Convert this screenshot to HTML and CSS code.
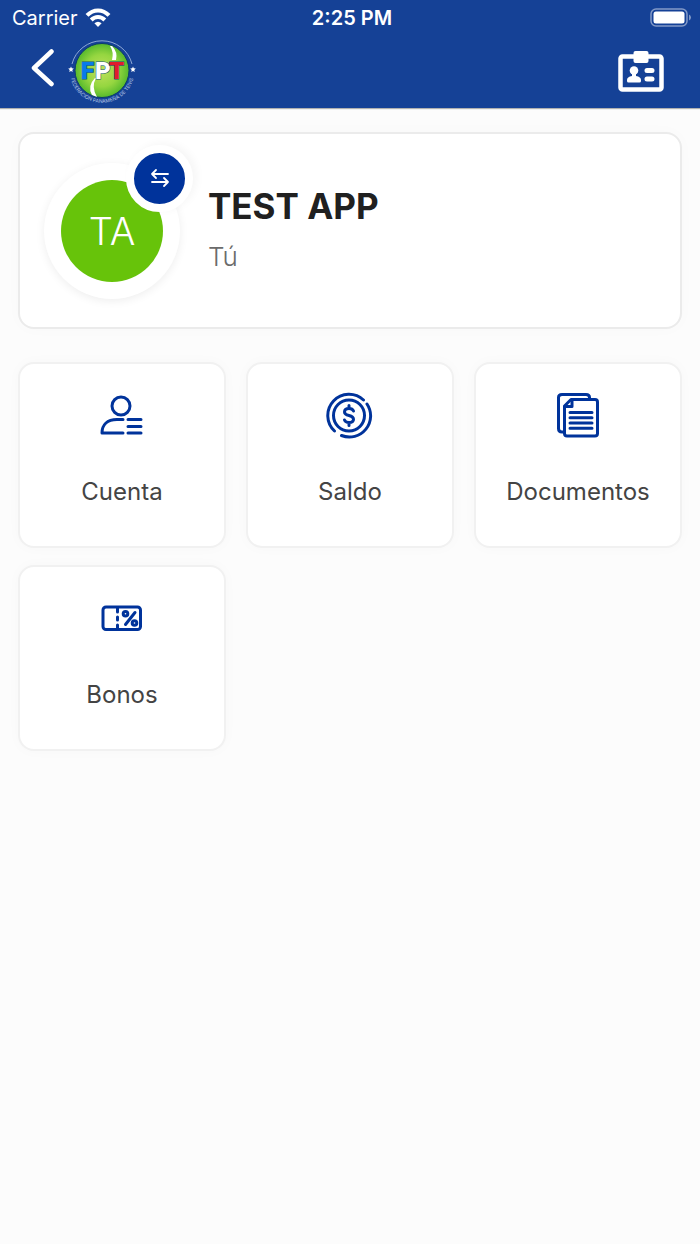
FILE: index.html
```html
<!DOCTYPE html>
<html lang="es">
<head>
<meta charset="UTF-8">
<meta name="viewport" content="width=device-width, initial-scale=1.0">
<title>FPT</title>
<link rel="stylesheet" href="styles.css">
</head>
<body>
<header class="header">
    <div class="status-bar">
        <div class="carrier">
            <span>Carrier</span>
            <svg class="wifi" viewBox="0 0 26 20" fill="none" stroke="#fff" stroke-width="4">
                <path d="M2 7.400C8.300 .8 17.700 .8 24 7.400"></path>
                <path d="M6.200 12C10.200 8 15.800 8 19.800 12"></path>
                <path d="M13 19l-3.600-3.700q3.600-3 7.200 0z" fill="#fff" stroke="none"></path>
            </svg>
        </div>
        <span class="time">2:25 PM</span>
        <svg class="battery" viewBox="0 0 42 20">
            <rect x="1" y="1" width="36" height="17" rx="5" fill="none" stroke="#8299c7" stroke-width="1.500"></rect>
            <rect x="3.500" y="3.500" width="31" height="12" rx="2.500" fill="#fff"></rect>
            <path d="M39 6.500q2 1 2 3t-2 3z" fill="#8299c7"></path>
        </svg>
    </div>
    <nav class="nav-bar">
        <div class="nav-left">
            <button class="icon-button" aria-label="Volver">
                <svg class="back-icon" viewBox="0 0 24 38" fill="none" stroke="#fff" stroke-width="4.500" stroke-linecap="round" stroke-linejoin="round">
                    <path d="M21.500 2.500L4 19l17.500 16"></path>
                </svg>
            </button>
            <svg class="logo" viewBox="0 0 68 68">
                <defs>
                    <radialGradient id="ball">
                        <stop offset="0" stop-color="#c0e05c"></stop>
                        <stop offset="0.600" stop-color="#95d640"></stop>
                        <stop offset="1" stop-color="#56b92c"></stop>
                    </radialGradient>
                    <path id="ring" d="M2 38A32.300 32.300 0 0 0 66 38"></path>
                </defs>
                <path d="M4 27A31 31 0 0 1 64 27" fill="none" stroke="#8ea8d6" stroke-width="1"></path>
                <circle cx="34" cy="33.500" r="27" fill="url(#ball)" stroke="#0c3c6b" stroke-width="1"></circle>
                <path d="M44 9q6 6 4 14h-4q2-8-2-14z" fill="#fff"></path>
                <path d="M27 41q-8 8-3 17l5 2q-6-10-1-19z" fill="#fff"></path>
                <g class="logo-name">
                    <text x="13" y="42" fill="#087bea">F</text>
                    <text x="27" y="42" fill="#fff">P</text>
                    <text x="41" y="42" fill="#e11c2c">T</text>
                </g>
                <text class="logo-ring"><textPath href="#ring" startOffset="50%" text-anchor="middle">FEDERACIÓN PANAMEÑA DE TENIS</textPath></text>
                <path id="star" d="M3 29.500l.8 1.800 2 .2-1.500 1.400.4 2-1.700-1-1.700 1 .4-2-1.500-1.400 2-.2z" fill="#fff"></path>
                <use href="#star" x="62"></use>
            </svg>
        </div>
        <button class="icon-button" aria-label="Carné">
            <svg class="badge-icon" viewBox="0 0 46 42">
                <rect x="2.500" y="6.500" width="41" height="33" rx="2" fill="none" stroke="#fff" stroke-width="4.500"></rect>
                <rect x="15.500" y="1" width="15" height="12" rx="2" fill="#fff"></rect>
                <circle cx="16" cy="20.500" r="4.300" fill="#fff"></circle>
                <path d="M14 23h4v3q5 .8 5 4v1q0 1.500-1.500 1.500h-11Q9 32.500 9 31v-1q0-3.200 5-4z" fill="#fff"></path>
                <path d="M29 20.500h5M29 29h5" stroke="#fff" stroke-width="5" stroke-linecap="round"></path>
            </svg>
        </button>
    </nav>
</header>

<main class="content">
    <section class="profile">
        <div class="avatar">
            <div class="initials">TA</div>
            <button class="switch" aria-label="Cambiar perfil">
                <svg class="switch-icon" viewBox="0 0 20 20" fill="none" stroke="#fff" stroke-width="1.800" stroke-linecap="round" stroke-linejoin="round">
                    <path d="M18 6H2l4-4M2 6l4 4M2 14h16l-4-4M18 14l-4 4"></path>
                </svg>
            </button>
        </div>
        <div class="profile-info">
            <h1 class="name">TEST APP</h1>
            <p class="relation">Tú</p>
        </div>
    </section>

    <section class="menu">
        <a class="menu-item" href="#cuenta">
            <svg class="menu-icon" viewBox="0 0 48 48">
                <circle cx="23" cy="14" r="9"></circle>
                <path d="M25 27.500h-6C9 27.500 4 33 4 41h21M30 27.500h13M30 34.500h13M30 41h13"></path>
            </svg>
            <span>Cuenta</span>
        </a>
        <a class="menu-item" href="#saldo">
            <svg class="menu-icon" viewBox="0 0 48 48">
                <circle cx="23" cy="23.500" r="15.500"></circle>
                <path d="M8.500 39A21.200 21.200 0 0 1 37.500 8M41 12A21.200 21.200 0 0 1 15.500 43.500"></path>
                <path d="M27.500 19Q26.500 16.500 23 16.500q-4.500 0-4.500 3.500 0 2.500 4.500 3.500t4.500 3.700Q27.500 30.500 23 30.500q-3.500 0-4.500-2.500M23 13.500v3M23 30.500v3"></path>
            </svg>
            <span>Saldo</span>
        </a>
        <a class="menu-item" href="#documentos">
            <svg class="menu-icon" viewBox="0 0 48 48">
                <path d="M9 40H8q-3.500 0-3.500-3.500v-31Q4.500 2.500 8 2.500h24q3.500 0 3.500 3v2"></path>
                <path d="M17 7.500h24q2.500 0 2.500 2.500v31.500q0 2.500-2.500 2.500H13q-2.500 0-2.500-2.500V14z"></path>
                <path d="M18 8v6.500h-7M16 20.500h22M16 25.700h22M16 31h22M16 36.200h22"></path>
            </svg>
            <span>Documentos</span>
        </a>
        <a class="menu-item" href="#bonos">
            <svg class="menu-icon" viewBox="0 0 48 48">
                <rect x="5" y="12" width="37.500" height="22.500" rx="3"></rect>
                <path d="M19.500 13v4M19.500 22v3M19.500 30v4M27.500 29.500l9.500-12"></path>
                <circle cx="27.500" cy="18.800" r="2.300"></circle>
                <circle cx="36.500" cy="28" r="2.300"></circle>
            </svg>
            <span>Bonos</span>
        </a>
    </section>
</main>
</body>
</html>
```

FILE: styles.css
```css
:root {
    --header: #154196;
    --accent: #00339b;
    --green: #67c30a;
    --bg: #fcfcfc;
    --border: #ebebeb;
    --text: #202020;
    --text-secondary: #6b6b6b;
}

* {
    box-sizing: border-box;
}

body {
    margin: 0;
    background: var(--bg);
    color: var(--text);
    font-family: Inter, "Liberation Sans", sans-serif;
}

button {
    padding: 0;
    border: none;
    background: none;
    cursor: pointer;
}

svg {
    display: block;
}

.header {
    background: var(--header);
    color: #fff;
    box-shadow: 0 1px 1px rgba(0,0,0,0.3);
}

.status-bar {
    display: grid;
    grid-template-columns: 1fr auto 1fr;
    align-items: center;
    height: 36px;
    padding: 0 8px 0 12px;
    font-size: 20px;
    line-height: 36px;
}

.carrier {
    display: flex;
    align-items: center;
    gap: 7px;
}

.wifi {
    width: 26px;
    height: 20px;
}

.time {
    font-weight: 600;
}

.battery {
    width: 42px;
    height: 20px;
    justify-self: end;
}

.nav-bar {
    display: flex;
    justify-content: space-between;
    align-items: center;
    height: 72px;
    padding: 0 36px 2px 30px;
}

.nav-left {
    display: flex;
    align-items: center;
    gap: 14px;
}

.back-icon {
    width: 24px;
    height: 38px;
    margin-bottom: 6px;
}

.logo {
    width: 68px;
    height: 68px;
}

.logo-name {
    font-family: Roboto, sans-serif;
    font-size: 24px;
    font-weight: 900;
    stroke: #14527a;
    stroke-width: 1px;
    paint-order: stroke;
}

.logo-ring {
    fill: #b6c6e4;
    font-size: 5px;
}

.badge-icon {
    width: 46px;
    height: 42px;
}

.content {
    padding: 24px 18px;
}

.profile {
    display: flex;
    align-items: center;
    gap: 28px;
    min-height: 197px;
    padding: 24px;
    background: #fff;
    border: 2px solid var(--border);
    border-radius: 16px;
    box-shadow: 0 0 16px rgba(0,0,0,0.02);
}

.avatar {
    position: relative;
    flex-shrink: 0;
    padding: 17px;
    border-radius: 50%;
    background: #fff;
    box-shadow: 0 2px 10px rgba(0,0,0,0.07);
}

.initials {
    display: flex;
    justify-content: center;
    align-items: center;
    width: 102px;
    height: 102px;
    border-radius: 50%;
    background: var(--green);
    color: #fff;
    font-size: 38px;
    font-weight: 300;
}

/* sits on the top right edge of the avatar */
.switch {
    position: absolute;
    top: -18px;
    right: -13px;
    display: flex;
    justify-content: center;
    align-items: center;
    width: 67px;
    height: 67px;
    border: 8px solid #fff;
    border-radius: 50%;
    background: var(--accent);
    box-shadow: 4px -2px 8px rgba(0,0,0,0.04);
}

.switch-icon {
    width: 20px;
    height: 20px;
}

.name {
    margin: 0 0 12px;
    font-size: 35px;
    font-weight: 700;
    line-height: 40px;
}

.relation {
    margin: 0;
    color: var(--text-secondary);
    font-size: 26px;
    font-weight: 300;
    line-height: 38px;
}

.menu {
    display: grid;
    grid-template-columns: repeat(3, 1fr);
    gap: 17px 20px;
    margin-top: 33px;
}

.menu-item {
    display: flex;
    flex-direction: column;
    align-items: center;
    gap: 37px;
    padding: 28px 8px 39px;
    background: #fff;
    border: 2px solid #f1f1f1;
    border-radius: 16px;
    box-shadow: 0 0 14px rgba(0,0,0,0.025);
    color: #444;
    font-size: 24px;
    line-height: 30px;
    text-decoration: none;
}

.menu-icon {
    width: 48px;
    height: 48px;
    fill: none;
    stroke: var(--accent);
    stroke-width: 3;
    stroke-linecap: round;
    stroke-linejoin: round;
}
```
